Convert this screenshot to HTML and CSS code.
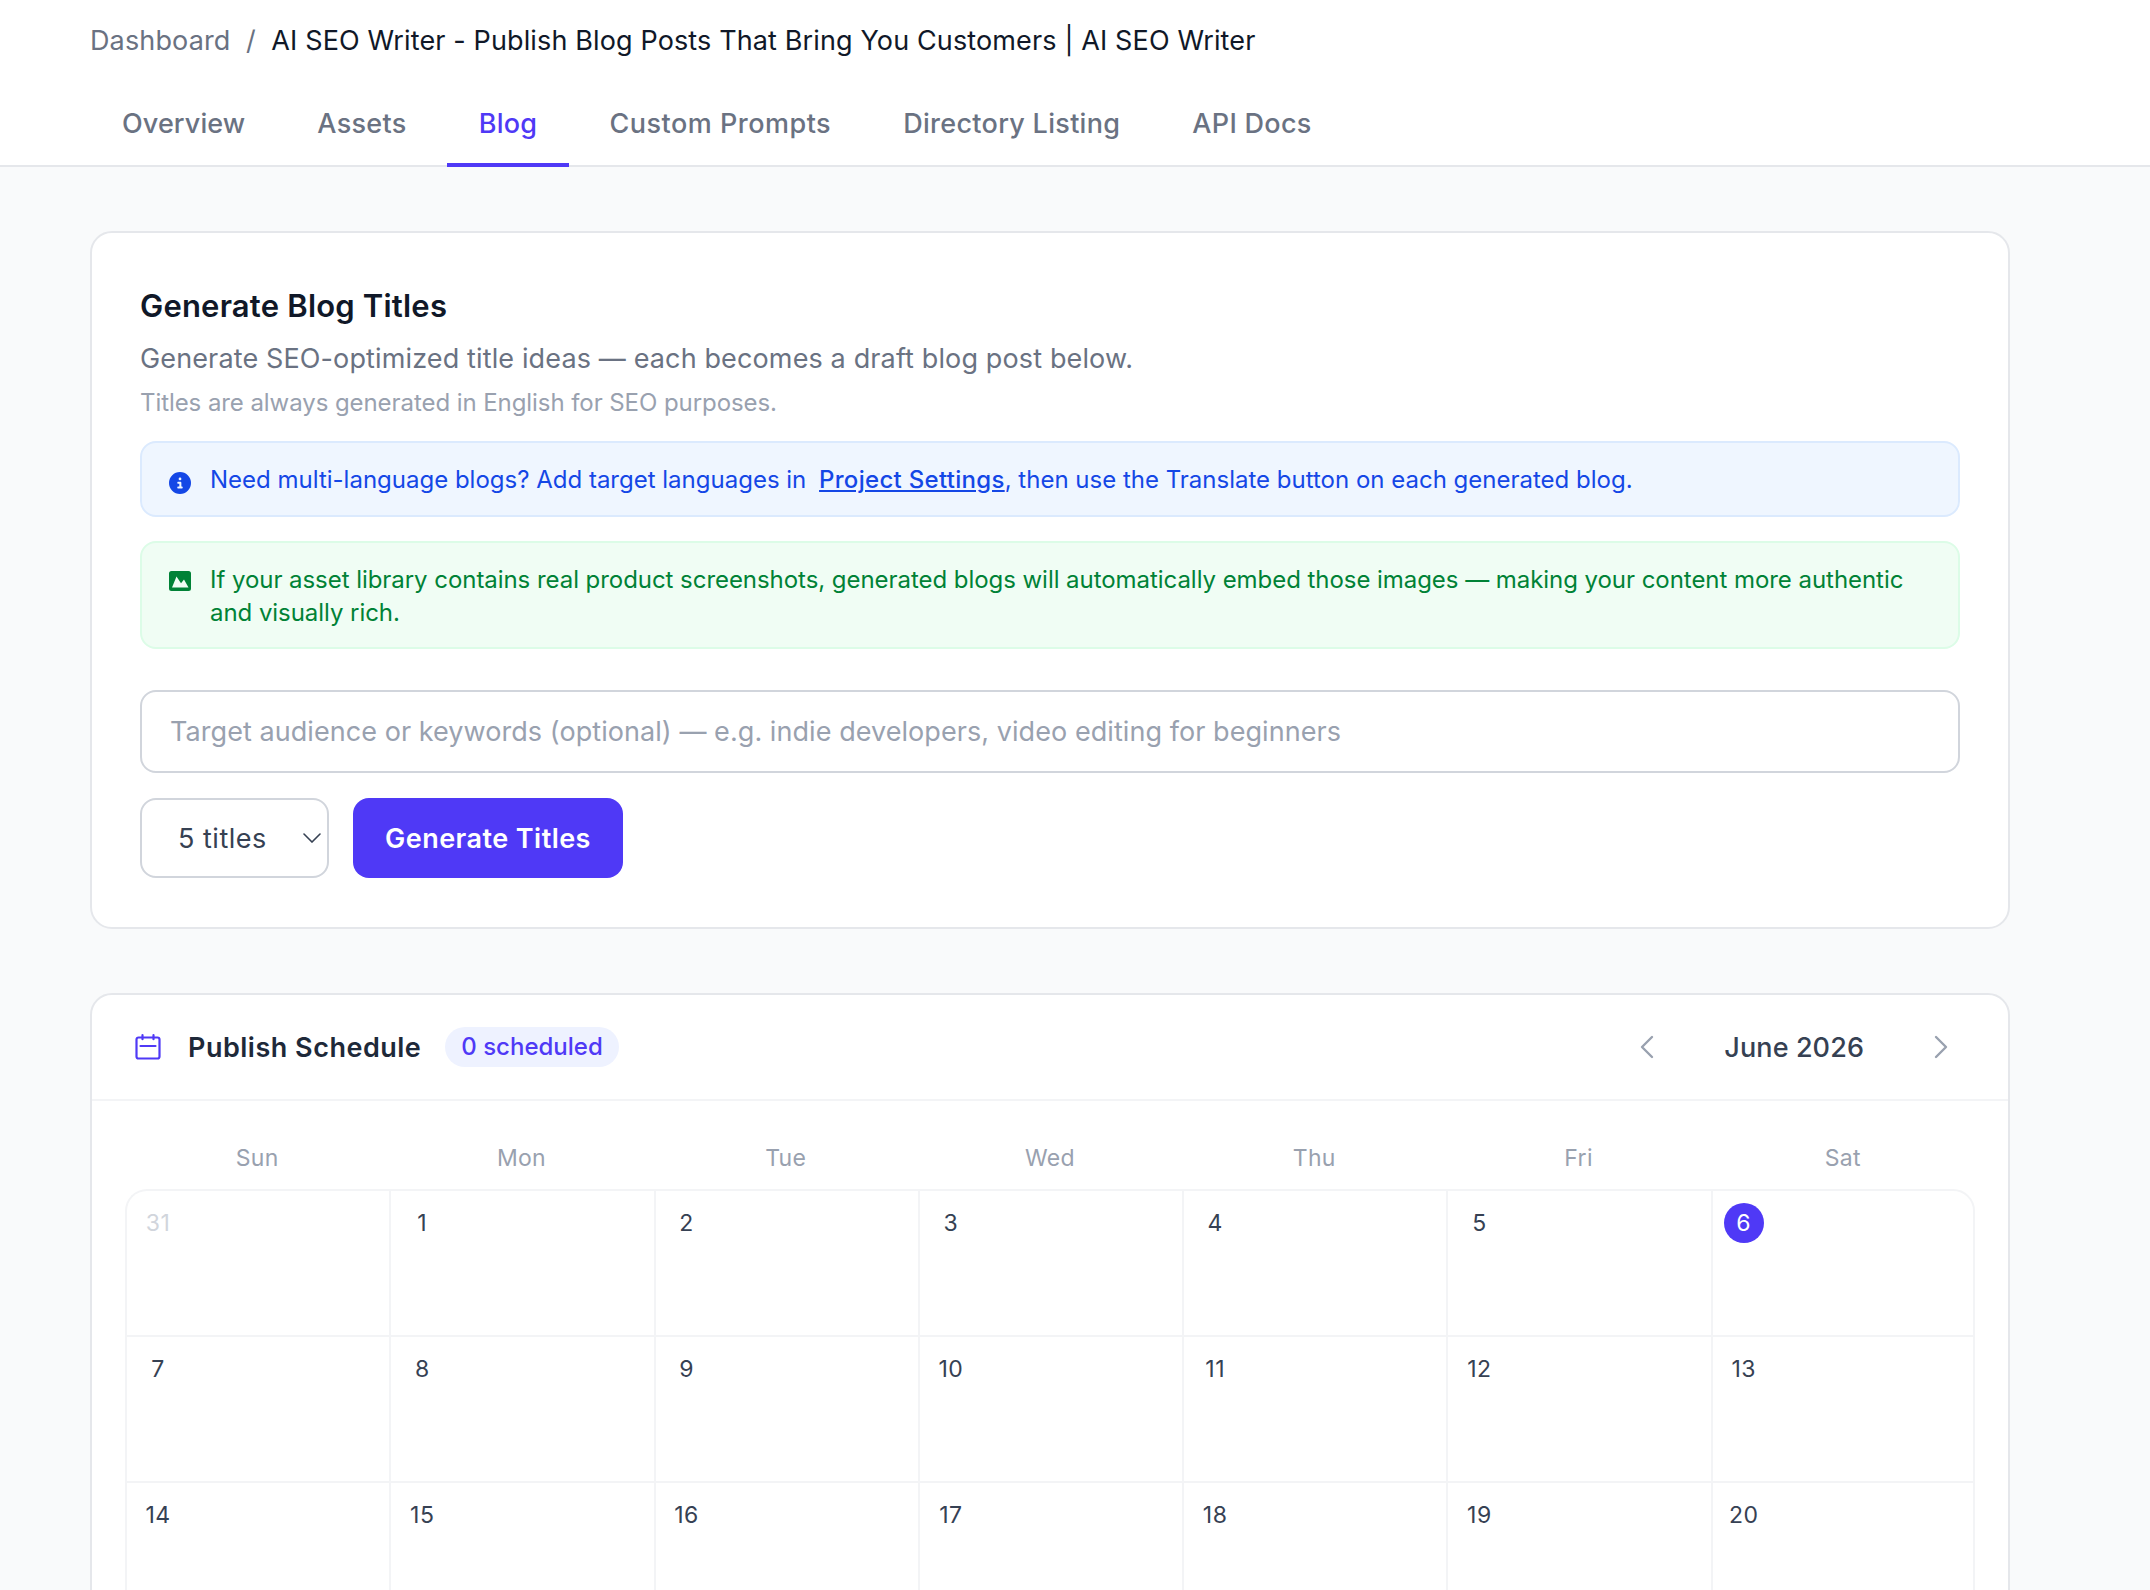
FILE: index.html
```html
<!DOCTYPE html>
<html lang="en">
<head>
    <meta charset="UTF-8">
    <meta name="viewport" content="width=device-width, initial-scale=1.0">
    <title>Blog - AI SEO Writer</title>
    <link rel="stylesheet" href="styles.css">
</head>
<body>
    <header class="topbar">
        <div class="breadcrumb">
            <span class="crumb-link">Dashboard</span>
            <span class="crumb-sep">/</span>
            <span class="crumb-current">AI SEO Writer - Publish Blog Posts That Bring You Customers | AI SEO Writer</span>
        </div>
        <nav class="tabs">
            <a class="tab">Overview</a>
            <a class="tab">Assets</a>
            <a class="tab active">Blog</a>
            <a class="tab">Custom Prompts</a>
            <a class="tab">Directory Listing</a>
            <a class="tab">API Docs</a>
        </nav>
    </header>

    <main class="content">
        <section class="card generator">
            <h2>Generate Blog Titles</h2>
            <p class="lead">Generate SEO-optimized title ideas — each becomes a draft blog post below.</p>
            <p class="hint">Titles are always generated in English for SEO purposes.</p>

            <div class="alert alert-blue">
                <svg class="alert-icon" viewBox="0 0 512 512"><path fill="currentColor" d="M256 512A256 256 0 1 0 256 0a256 256 0 1 0 0 512zM216 336h24V272H216c-13.300 0-24-10.700-24-24s10.700-24 24-24h48c13.300 0 24 10.700 24 24v88h8c13.300 0 24 10.700 24 24s-10.700 24-24 24H216c-13.300 0-24-10.700-24-24s10.700-24 24-24zm40-208a32 32 0 1 1 0 64 32 32 0 1 1 0-64z"/></svg>
                <p>Need multi-language blogs? Add target languages in <a class="alert-link">Project Settings</a>, then use the Translate button on each generated blog.</p>
            </div>

            <div class="alert alert-green">
                <svg class="alert-icon image-icon" viewBox="0 0 22 20"><path fill="currentColor" fill-rule="evenodd" d="M2.500 0h17A2.500 2.500 0 0 1 22 2.500v15a2.500 2.500 0 0 1-2.500 2.500h-17A2.500 2.500 0 0 1 0 17.500v-15A2.500 2.500 0 0 1 2.500 0zM3 16.500h16.500L15 8.500l-3 3.800L7.500 5.500z"/></svg>
                <p>If your asset library contains real product screenshots, generated blogs will automatically embed those images — making your content more authentic and visually rich.</p>
            </div>

            <input class="text-input" type="text" placeholder="Target audience or keywords (optional) — e.g. indie developers, video editing for beginners">

            <div class="actions">
                <div class="select-wrap">
                    <select class="count-select">
                        <option>5 titles</option>
                        <option>10 titles</option>
                    </select>
                    <svg class="select-arrow" viewBox="0 0 18 10"><path d="M1 1l8 8 8-8" fill="none" stroke="currentColor" stroke-width="1.600" stroke-linecap="round"/></svg>
                </div>
                <button class="primary-btn">Generate Titles</button>
            </div>
        </section>

        <section class="card schedule">
            <div class="schedule-head">
                <svg class="cal-icon" viewBox="0 0 26 26"><path fill="none" stroke="currentColor" stroke-width="2.200" stroke-linecap="round" stroke-linejoin="round" d="M7.500 1.200v4M18.500 1.200v4M3.500 3.500h19a2 2 0 0 1 2 2v17a2 2 0 0 1-2 2h-19a2 2 0 0 1-2-2v-17a2 2 0 0 1 2-2zM5.500 12h15"/></svg>
                <h3>Publish Schedule</h3>
                <span class="chip">0 scheduled</span>
                <div class="month-nav">
                    <svg class="chev" viewBox="0 0 14 24"><path d="M12 2 2 12l10 10" fill="none" stroke="currentColor" stroke-width="2.400" stroke-linecap="round" stroke-linejoin="round"/></svg>
                    <span class="month">June 2026</span>
                    <svg class="chev" viewBox="0 0 14 24"><path d="m2 2 10 10L2 22" fill="none" stroke="currentColor" stroke-width="2.400" stroke-linecap="round" stroke-linejoin="round"/></svg>
                </div>
            </div>
            <div class="calendar">
                <div class="weekdays">
                    <span>Sun</span><span>Mon</span><span>Tue</span><span>Wed</span><span>Thu</span><span>Fri</span><span>Sat</span>
                </div>
                <div class="days">
                    <div class="day muted"><span>31</span></div>
                    <div class="day"><span>1</span></div>
                    <div class="day"><span>2</span></div>
                    <div class="day"><span>3</span></div>
                    <div class="day"><span>4</span></div>
                    <div class="day"><span>5</span></div>
                    <div class="day today"><span>6</span></div>
                    <div class="day"><span>7</span></div>
                    <div class="day"><span>8</span></div>
                    <div class="day"><span>9</span></div>
                    <div class="day"><span>10</span></div>
                    <div class="day"><span>11</span></div>
                    <div class="day"><span>12</span></div>
                    <div class="day"><span>13</span></div>
                    <div class="day"><span>14</span></div>
                    <div class="day"><span>15</span></div>
                    <div class="day"><span>16</span></div>
                    <div class="day"><span>17</span></div>
                    <div class="day"><span>18</span></div>
                    <div class="day"><span>19</span></div>
                    <div class="day"><span>20</span></div>
                </div>
            </div>
        </section>
    </main>
</body>
</html>
```

FILE: styles.css
```css
* {
    box-sizing: border-box;
}

html, body {
    height: 100%;
    overflow: hidden;
}

body {
    margin: 0;
    background-color: #f9fafb;
    font-family: Inter, "Liberation Sans", sans-serif;
    color: #101828;
}

p, h2, h3 {
    margin: 0;
}

.topbar {
    background-color: #fff;
    border-bottom: 2px solid #e5e7eb;
    padding: 0 90px;
    height: 167px;
}

.breadcrumb {
    display: flex;
    gap: 15.500px;
    height: 80px;
    align-items: center;
    font-size: 27px;
    letter-spacing: 0.13px;
}

.crumb-link {
    color: #6a7282;
}

.crumb-sep {
    color: #6a7282;
}

.tabs {
    display: flex;
    gap: 8px;
}

.tab {
    padding: 0 32px;
    height: 87px;
    line-height: 88px;
    font-size: 27px;
    font-weight: 500;
    letter-spacing: 0.3px;
    color: #6a7282;
    border-bottom: 4px solid transparent;
}

.tab:first-child {
    letter-spacing: 0.1px;
}

.tab:nth-child(4) {
    letter-spacing: 0.5px;
}

.tab.active {
    color: #4f39f6;
    border-bottom-color: #4f39f6;
}

.content {
    padding: 64px 140px 0 90px;
    display: flex;
    flex-direction: column;
    gap: 64px;
}

.card {
    background-color: #fff;
    border: 2px solid #e5e7eb;
    border-radius: 22px;
}

.generator {
    padding: 50px 48px 49px;
}

.generator h2 {
    font-size: 31px;
    font-weight: 600;
    line-height: 46px;
    letter-spacing: 0.2px;
}

.lead {
    margin-top: 10px;
    font-size: 27px;
    line-height: 40px;
    letter-spacing: 0.13px;
    color: #6a7282;
}

.hint {
    margin-top: 6px;
    font-size: 24px;
    line-height: 36px;
    letter-spacing: -0.07px;
    color: #99a1af;
}

.alert {
    display: flex;
    gap: 19px;
    border: 2px solid;
    border-radius: 16px;
    font-size: 24px;
    line-height: 33px;
}

.alert-icon {
    width: 22px;
    height: 22px;
    flex: none;
}

.alert-blue {
    margin-top: 20px;
    padding: 20px 27px 19px;
    background-color: #eff6ff;
    border-color: #dbeafe;
    color: #1447e6;
}

.alert-blue .alert-icon {
    margin-top: 9px;
}

.alert-link {
    margin-left: 6px;
    font-weight: 500;
    letter-spacing: 0.3px;
    text-decoration: underline;
}

.alert-green {
    margin-top: 24px;
    padding: 20px 27px 18px;
    background-color: #f0fdf4;
    border-color: #dcfce7;
    color: #008236;
    letter-spacing: -0.05px;
}

.image-icon {
    height: 20px;
    margin-top: 8px;
}

.text-input {
    display: block;
    width: 100%;
    height: 83px;
    margin-top: 41px;
    padding: 0 28px;
    border: 2px solid #d1d5dc;
    border-radius: 16px;
    font: 400 27px Inter, sans-serif;
    letter-spacing: 0.06px;
    color: #364153;
    outline: none;
}

.text-input::placeholder {
    color: #99a1af;
    opacity: 1;
}

.actions {
    display: flex;
    gap: 24px;
    margin-top: 25px;
}

.select-wrap {
    position: relative;
}

.count-select {
    appearance: none;
    display: block;
    width: 189px;
    height: 80px;
    padding: 0 36px;
    background-color: #fff;
    border: 2px solid #d1d5dc;
    border-radius: 16px;
    font: 400 27px Inter, sans-serif;
    letter-spacing: 0.5px;
    color: #364153;
}

.select-arrow {
    position: absolute;
    right: 8px;
    top: 35px;
    width: 18px;
    height: 10px;
    color: #364153;
}

.primary-btn {
    width: 270px;
    height: 80px;
    background-color: #4f39f6;
    border: none;
    border-radius: 16px;
    color: #fff;
    font: 600 27px Inter, sans-serif;
    letter-spacing: 0.45px;
}

.schedule-head {
    display: flex;
    align-items: center;
    height: 106px;
    padding: 0 60px 0 43px;
    border-bottom: 2px solid #f3f4f6;
}

.cal-icon {
    width: 26px;
    height: 26px;
    color: #4f39f6;
}

.schedule-head h3 {
    margin-left: 27px;
    font-size: 27px;
    font-weight: 600;
    letter-spacing: 0.5px;
    color: #1e2939;
}

.chip {
    margin-left: 24px;
    padding: 0 16px;
    height: 40px;
    line-height: 40px;
    border-radius: 20px;
    background-color: #eef2ff;
    color: #4f39f6;
    font-size: 24px;
    font-weight: 500;
}

.month-nav {
    margin-left: auto;
    display: flex;
    align-items: center;
    gap: 70px;
}

.chev {
    width: 14px;
    height: 24px;
    color: #99a1af;
}

.month {
    font-size: 27px;
    font-weight: 500;
    letter-spacing: 0.1px;
    color: #364153;
}

.calendar {
    padding: 0 33px;
}

.weekdays {
    display: grid;
    grid-template-columns: repeat(7, 1fr);
    height: 88px;
    align-items: center;
    padding-top: 26px;
    text-align: center;
    font-size: 23px;
    letter-spacing: 0.3px;
    color: #99a1af;
}

.days {
    display: grid;
    grid-template-columns: repeat(7, 1fr);
    grid-template-rows: 148px;
    grid-auto-rows: 146px;
}

.day {
    padding: 12px 11px;
    border-left: 2px solid #f3f4f6;
    border-bottom: 2px solid #f3f4f6;
    font-size: 23px;
    letter-spacing: 0.5px;
    color: #364153;
}

.day:nth-child(-n+7) {
    border-top: 2px solid #f3f4f6;
}

.day:nth-child(7n) {
    border-right: 2px solid #f3f4f6;
}

.day:first-child {
    border-top-left-radius: 22px;
}

.day:nth-child(7) {
    border-top-right-radius: 22px;
}

.day span {
    display: block;
    width: 40px;
    height: 40px;
    line-height: 40px;
    text-align: center;
    border-radius: 50%;
}

.day.muted {
    color: #d1d5dc;
}

.day.today span {
    background-color: #4f39f6;
    color: #fff;
}
```
